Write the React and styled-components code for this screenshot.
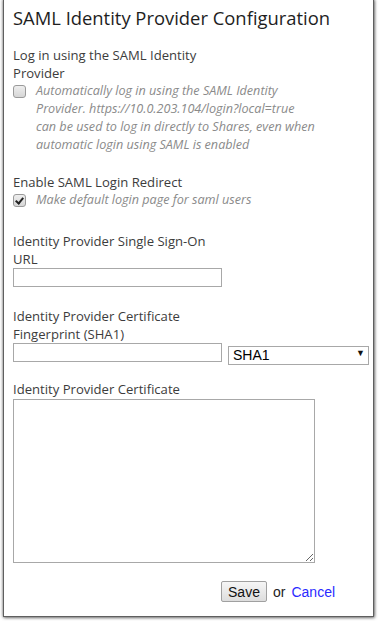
import React, { useState } from "react";
import styled, { createGlobalStyle } from "styled-components";

const Global = createGlobalStyle`
  html, body {
    margin: 0;
    padding: 0;
    background: #fff;
  }
  body {
    font-family: "Open Sans", "Noto Sans", sans-serif;
  }
`;

const Frame = styled.div`
  padding: 0 4px 6px 3px;
`;

const Panel = styled.div`
  margin-top: -1px;
  width: 371px;
  border: 1px solid #5f5f5f;
  background: #fff;
  box-shadow: 0 0 3px rgba(0, 0, 0, 0.55), 1px 1px 3px rgba(0, 0, 0, 0.35);
  padding: 0 9px 14px 9px;
  box-sizing: border-box;
  color: #3a3a3a;
`;

const Title = styled.h2`
  margin: 0;
  padding: 5px 0 0 0;
  font-size: 18.4px;
  line-height: 26px;
  font-weight: 400;
  color: #1e1e1e;
`;

const Field = styled.div`
  margin-top: ${(p) => p.$gap}px;
`;

const Label = styled.div`
  width: 205px;
  font-size: 13.1px;
  line-height: 18px;
  color: #3c3c3c;
`;

const CheckRow = styled.label`
  display: flex;
  align-items: flex-start;
  gap: 10px;
  min-height: 18px;
`;

const Box = styled.input.attrs({ type: "checkbox" })`
  appearance: none;
  flex: none;
  margin: 3px 0 0 0;
  width: 13px;
  height: 13px;
  border: 1px solid #9a9a9a;
  border-radius: 3px;
  background: linear-gradient(#eeeeee, #d6d6d6);
  box-sizing: border-box;
  display: grid;
  place-items: center;

  &:checked::after {
    content: "";
    width: 3px;
    height: 6px;
    border: solid #222;
    border-width: 0 2px 2px 0;
    transform: translate(0, -1px) rotate(40deg);
  }
`;

const Hint = styled.div`
  width: 292px;
  font-size: 12.6px;
  line-height: 18px;
  font-style: italic;
  color: #8a8a8a;
`;

const TextBox = styled.input.attrs({ type: "text" })`
  display: block;
  flex: none;
  width: 209px;
  height: 19px;
  margin: 0;
  padding: 0 3px;
  border: 1px solid #a8a8a8;
  box-sizing: border-box;
  font: 13px "Liberation Sans", Arial, sans-serif;
  outline: none;
`;

const InlineRow = styled.div`
  display: flex;
  gap: 6px;
`;

const SelectWrap = styled.div`
  position: relative;
  flex: none;
  width: 141px;
  height: 19px;
`;

const Select = styled.select`
  appearance: none;
  width: 100%;
  height: 100%;
  margin: 0;
  padding: 0 0 0 4px;
  border: 1px solid #a8a8a8;
  border-radius: 0;
  background: #fff;
  box-sizing: border-box;
  font: 14px "Liberation Sans", Arial, sans-serif;
  color: #000;
  outline: none;
`;

const Arrow = styled.span`
  position: absolute;
  right: 4px;
  top: 3px;
  font-size: 9px;
  line-height: 13px;
  color: #111;
  pointer-events: none;
`;

const Area = styled.textarea`
  display: block;
  width: 302px;
  height: 164px;
  margin: 1px 0 0 0;
  border: 1px solid #a8a8a8;
  box-sizing: border-box;
  resize: both;
  outline: none;
`;

const Actions = styled.div`
  display: flex;
  align-items: center;
  gap: 6px;
  margin-top: 18px;
  padding-left: 208px;
  font: 14px "Liberation Sans", Arial, sans-serif;
  color: #222;
`;

const Button = styled.button`
  width: 46px;
  height: 21px;
  padding: 0;
  border: 1px solid #a0a0a0;
  border-radius: 2px;
  background: linear-gradient(#f6f6f6, #dddddd);
  font: 14px "Liberation Sans", Arial, sans-serif;
  color: #111;
`;

const CancelLink = styled.a`
  color: #2a2aff;
  text-decoration: none;
  cursor: pointer;
`;

export default function App() {
  const [autoLogin, setAutoLogin] = useState(false);
  const [redirect, setRedirect] = useState(true);

  return (
    <Frame>
      <Global />
      <Panel>
        <Title>SAML Identity Provider Configuration</Title>

        <Field $gap={15}>
          <Label>Log in using the SAML Identity Provider</Label>
          <CheckRow>
            <Box checked={autoLogin} onChange={(e) => setAutoLogin(e.target.checked)} />
            <Hint>
              Automatically log in using the SAML Identity Provider.
              https://10.0.203.104/login?local=true
              <br />
              can be used to log in directly to Shares, even when automatic
              login using SAML is enabled
            </Hint>
          </CheckRow>
        </Field>

        <Field $gap={19}>
          <Label>Enable SAML Login Redirect</Label>
          <CheckRow>
            <Box checked={redirect} onChange={(e) => setRedirect(e.target.checked)} />
            <Hint>Make default login page for saml users</Hint>
          </CheckRow>
        </Field>

        <Field $gap={23}>
          <Label>Identity Provider Single Sign-On URL</Label>
          <TextBox />
        </Field>

        <Field $gap={20}>
          <Label>Identity Provider Certificate Fingerprint (SHA1)</Label>
          <InlineRow>
            <TextBox />
            <SelectWrap>
              <Select defaultValue="SHA1">
                <option>SHA1</option>
                <option>SHA256</option>
              </Select>
              <Arrow>▼</Arrow>
            </SelectWrap>
          </InlineRow>
        </Field>

        <Field $gap={18}>
          <Label>Identity Provider Certificate</Label>
          <Area />
        </Field>

        <Actions>
          <Button>Save</Button>
          <span>or</span>
          <CancelLink>Cancel</CancelLink>
        </Actions>
      </Panel>
    </Frame>
  );
}
